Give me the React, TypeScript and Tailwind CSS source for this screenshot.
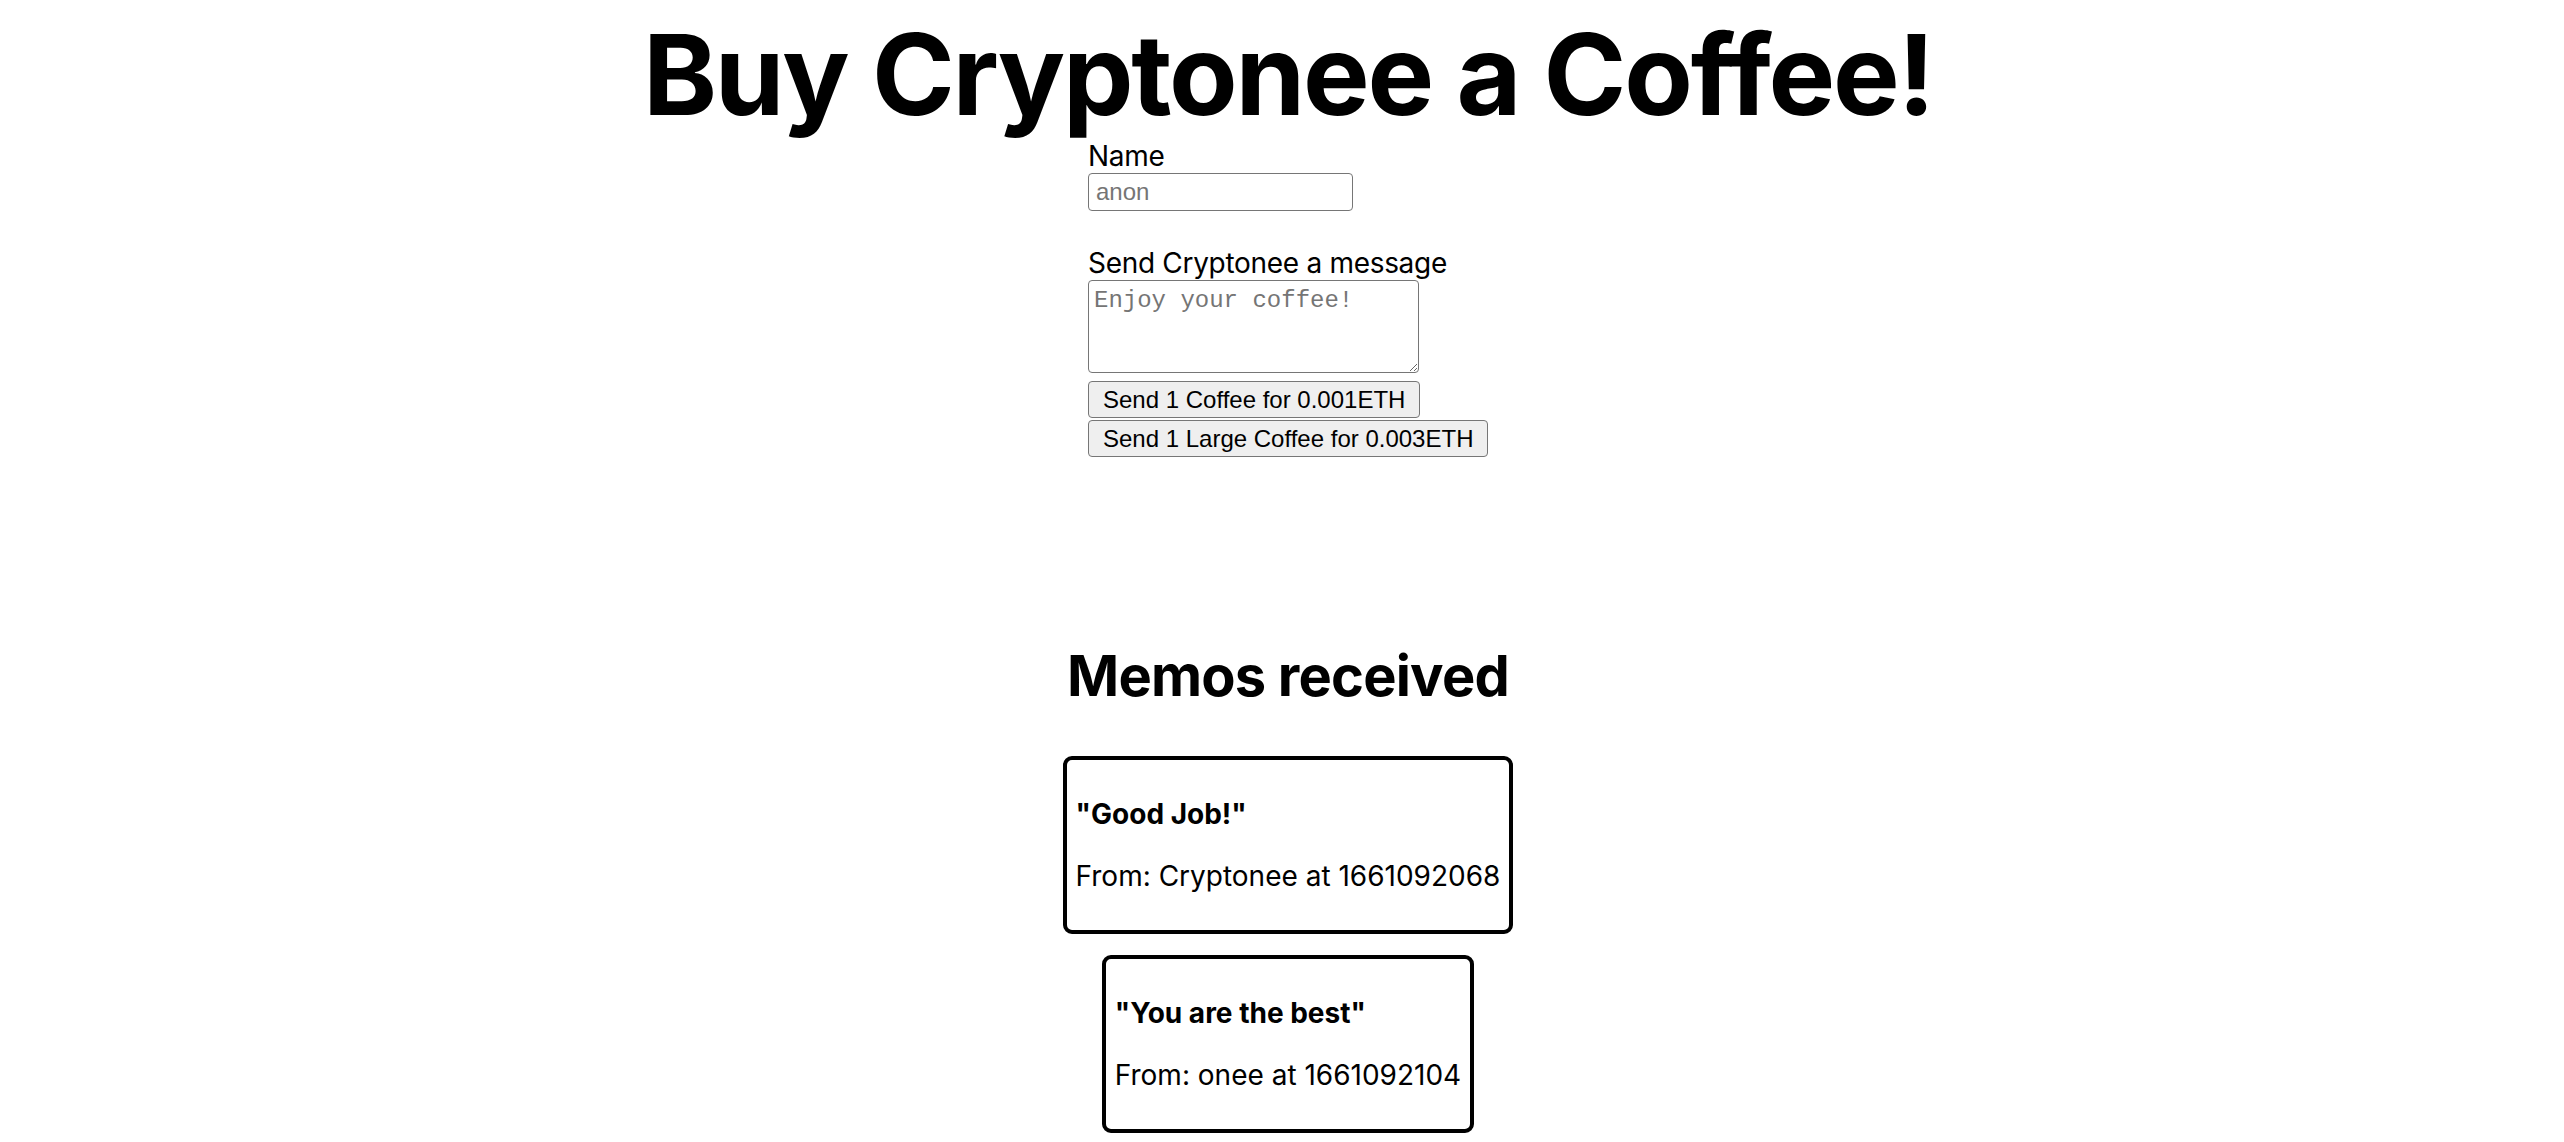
import { useState } from "react";

type Memo = {
  message: string;
  name: string;
  timestamp: number;
};

const memos: Memo[] = [
  { message: "Good Job!", name: "Cryptonee", timestamp: 1661092068 },
  { message: "You are the best", name: "onee", timestamp: 1661092104 },
];

export default function App() {
  const [name, setName] = useState("");
  const [message, setMessage] = useState("");

  return (
    <div className="min-h-screen bg-white text-black font-['Inter',sans-serif] pl-[12px]">
      <main className="flex flex-col items-center pt-[10px]">
        <h1 className="text-[112px] leading-[129px] font-bold tracking-[-2.2px] m-0">
          Buy Cryptonee a Coffee!
        </h1>

        {/* Coffee form */}
        <form className="w-[400px] flex flex-col items-start">
          <label className="block text-[28px] leading-[34px] tracking-[-0.3px]">Name</label>
          <input
            id="name"
            type="text"
            placeholder="anon"
            value={name}
            onChange={(e) => setName(e.target.value)}
            className="w-[265px] h-[38px] border border-[#767676] rounded-[4px] pl-[7px] pr-[4px] text-[24px] font-['Liberation_Sans',Arial,sans-serif] placeholder:text-[#757575] outline-none"
          />
          <div className="h-[35px]" />
          <label className="block text-[28px] leading-[34px] tracking-[-0.3px] whitespace-nowrap">
            Send Cryptonee a message
          </label>
          <textarea
            id="message"
            rows={2}
            placeholder="Enjoy your coffee!"
            value={message}
            onChange={(e) => setMessage(e.target.value)}
            className="w-[331px] h-[93px] border border-[#767676] rounded-[4px] px-[5px] pt-[6px] text-[24px] leading-[27px] font-['Liberation_Mono',monospace] placeholder:text-[#757575] outline-none resize"
          />
          <div className="mt-[8px] flex flex-col items-start gap-[2px]">
            <button
              type="button"
              className="h-[37px] px-[14px] bg-[#efefef] border border-[#767676] rounded-[4px] text-[24px] leading-none whitespace-nowrap font-['Liberation_Sans',Arial,sans-serif]"
            >
              Send 1 Coffee for 0.001ETH
            </button>
            <button
              type="button"
              className="h-[37px] px-[14px] bg-[#efefef] border border-[#767676] rounded-[4px] text-[24px] leading-none whitespace-nowrap font-['Liberation_Sans',Arial,sans-serif]"
            >
              Send 1 Large Coffee for 0.003ETH
            </button>
          </div>
        </form>

        {/* Memos */}
        <h1 className="mt-[185px] text-[56px] leading-[68px] font-bold tracking-[-0.8px]">
          Memos received
        </h1>
        <div className="mt-[46px] flex flex-col items-center gap-[21px]">
          {memos.map((memo, idx) => (
            <div
              key={idx}
              className="border-4 border-black rounded-[9px] p-[9px]"
            >
              <p className="my-[28px] text-[28px] leading-[34px] font-bold">
                "{memo.message}"
              </p>
              <p className="my-[28px] text-[28px] leading-[34px]">
                From: {memo.name} at {memo.timestamp.toString()}
              </p>
            </div>
          ))}
        </div>
      </main>
    </div>
  );
}
